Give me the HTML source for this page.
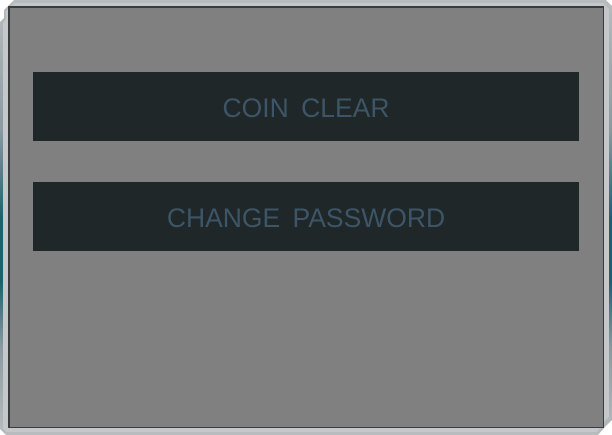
<!DOCTYPE html>
<html><head><style>
html,body{margin:0;padding:0;width:612px;height:435px;overflow:hidden;background:#fff;}
.outer{position:absolute;left:0;top:0;width:612px;height:435px;
 background:linear-gradient(to bottom,#b8bcbe 0%,#8a9aa0 30%,#1f6070 50%,#1f6070 65%,#8a9aa0 80%,#b8bcbe 100%);
 clip-path:polygon(14px 0,606px 0,612px 6px,612px 420px,606px 426px,598px 435px,6px 435px,0 429px,0 22px,4px 18px,4px 10px);}
.rim{position:absolute;left:3px;top:3px;right:3px;bottom:3px;background:#c4c8ca;
 clip-path:polygon(12px 0,600px 0,606px 6px,606px 414px,600px 420px,594px 429px,4px 429px,0 425px,0 20px,3px 16px,3px 8px);}
.inner{position:absolute;left:8px;top:6px;width:596px;height:422px;background:#3a3c3e;}
.panel{position:absolute;left:10px;top:8px;width:593px;height:419px;background:#808080;}
.btn{position:absolute;left:33px;width:546px;height:69px;background:#1f2729;color:#3d5566;
 font-family:"Liberation Sans",sans-serif;font-size:26.5px;text-align:center;line-height:72px;word-spacing:5px;}
</style></head><body>
<div class="outer"></div>
<div class="rim"></div>
<div class="inner"></div>
<div class="panel"></div>
<div class="btn" style="top:72px">COIN CLEAR</div>
<div class="btn" style="top:182px">CHANGE PASSWORD</div>
</body></html>
